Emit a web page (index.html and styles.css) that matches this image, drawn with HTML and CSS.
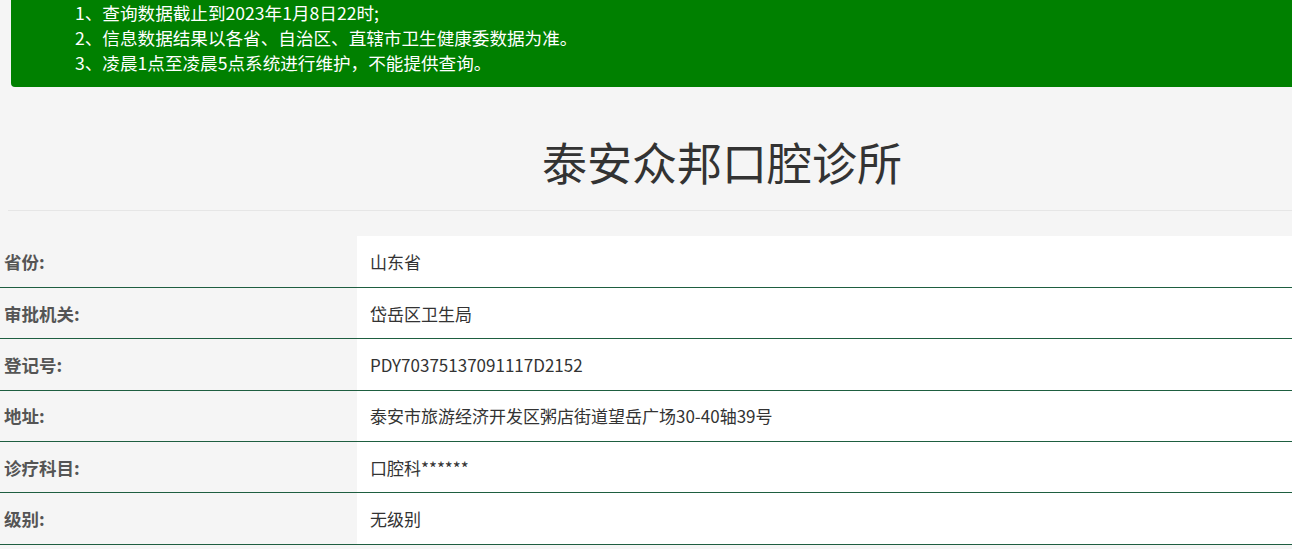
FILE: index.html
```html
<!DOCTYPE html>
<html lang="zh-CN">
<head>
<meta charset="utf-8">
<title>泰安众邦口腔诊所</title>
<link rel="stylesheet" href="styles.css">
</head>
<body>
<div class="notice">
  <p>1、查询数据截止到2023年1月8日22时;</p>
  <p>2、信息数据结果以各省、自治区、直辖市卫生健康委数据为准。</p>
  <p>3、凌晨1点至凌晨5点系统进行维护，不能提供查询。</p>
</div>
<h1 class="title">泰安众邦口腔诊所</h1>
<div class="divider"></div>
<table class="info">
  <tr><th>省份:</th><td>山东省</td></tr>
  <tr><th>审批机关:</th><td>岱岳区卫生局</td></tr>
  <tr><th>登记号:</th><td>PDY70375137091117D2152</td></tr>
  <tr><th>地址:</th><td>泰安市旅游经济开发区粥店街道望岳广场30-40轴39号</td></tr>
  <tr><th>诊疗科目:</th><td>口腔科******</td></tr>
  <tr><th>级别:</th><td>无级别</td></tr>
</table>
</body>
</html>
```
FILE: styles.css
```css
html, body {
  margin: 0;
  padding: 0;
  background: #f5f5f5;
  font-family: "Noto Sans CJK SC", "Noto Sans", sans-serif;
}
.notice {
  margin-left: 11px;
  background: #008000;
  border-bottom-left-radius: 4px;
  color: #fff;
  padding: 0 0 12px 64px;
  font-size: 17.6px;
  line-height: 25px;
}
.notice p {
  margin: 0;
}
.title {
  margin: 0;
  padding: 40px 0 0 152px;
  height: 83px;
  text-align: center;
  font-size: 45px;
  line-height: 70px;
  font-weight: normal;
  color: #333;
}
.divider {
  margin-left: 8px;
  border-top: 1px solid #e6e6e6;
  height: 0;
}
.info {
  margin-top: 25px;
  width: 100%;
  border-collapse: collapse;
  font-size: 17px;
}
.info tr {
  height: 51.4px;
  border-bottom: 1px solid #1e5e40;
}
.info th {
  width: 353px;
  padding: 0 0 0 4px;
  text-align: left;
  font-weight: bold;
  font-size: 17.5px;
  color: #555;
  background: #f5f5f5;
}
.info td {
  padding: 0 0 0 13px;
  color: #333;
  background: #fff;
}
```
